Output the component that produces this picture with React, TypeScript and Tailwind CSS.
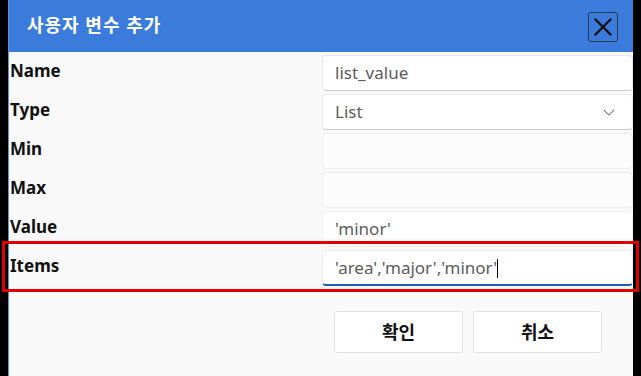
import { useState } from 'react';

const fields = [
  { label: 'Name', value: 'list_value', kind: 'text' },
  { label: 'Type', value: 'List', kind: 'select' },
  { label: 'Min', value: '', kind: 'empty' },
  { label: 'Max', value: '', kind: 'empty' },
  { label: 'Value', value: "'minor'", kind: 'plain' },
  { label: 'Items', value: "'area','major','minor'", kind: 'focus' },
];

function FieldBox({ kind, value }: { kind: string; value: string }) {
  let cls =
    'h-[36px] flex items-center px-[12px] rounded-[4px] text-[17px] text-[#5c5c5c] border ';
  if (kind === 'empty') cls += 'bg-[#fcfcfc] border-[#ececec]';
  else if (kind === 'plain') cls += 'bg-white border-[#f1f1f1]';
  else if (kind === 'focus') cls += 'bg-white border-[#ececec] border-b-2 border-b-[#1a5fb4]';
  else cls += 'bg-white border-[#e8e8e8] border-b-[#c9c9c9]';

  return (
    <div className={cls}>
      <span className="flex-1 whitespace-pre">
        {value}
        {kind === 'focus' && <span className="inline-block w-px h-[19px] bg-black align-middle -mt-[2px]" />}
      </span>
      {kind === 'select' && (
        <svg className="w-[14px] h-[14px] text-[#777] mr-[4px]" viewBox="0 0 16 16" fill="none" stroke="currentColor" strokeWidth={1.2}>
          <path d="M2 5.5l6 6 6-6" />
        </svg>
      )}
    </div>
  );
}

export default function App() {
  const [open] = useState(true);
  if (!open) return null;

  return (
    <div className="relative flex w-[641px] h-[376px] bg-black overflow-hidden" style={{ fontFamily: '"Noto Sans", "Noto Sans CJK KR", sans-serif' }}>
      <div className="w-[8px]" />
      <div className="flex-1 flex flex-col bg-[#f9f9f9] border-l border-[#5b8de0]">
        {/* title bar */}
        <div className="h-[52px] flex items-center justify-between bg-[#3b7bdb] pl-[18px] pr-[15px]">
          <h3 className="text-[18px] font-bold text-white tracking-[1px] -mt-[1px]">사용자 변수 추가</h3>
          <button className="w-[30px] h-[30px] mt-[2px] flex items-center justify-center border border-[#2a3950] rounded-[3px]">
            <svg className="w-[22px] h-[22px]" viewBox="0 0 24 24" fill="none" stroke="#111" strokeWidth={2.6}>
              <path d="M3 3l18 18M21 3L3 21" />
            </svg>
          </button>
        </div>

        {/* fields */}
        <div className="flex flex-col gap-[3px] pt-[3px]">
          {fields.map((f) => (
            <div key={f.label} className="grid grid-cols-[313px_1fr] items-center">
              <div className="pl-[1px] text-[17px] font-bold text-[#111] -mt-[4px]">{f.label}</div>
              <FieldBox kind={f.kind} value={f.value} />
            </div>
          ))}
        </div>

        <div className="flex gap-[10px] pl-[325px] pt-[25px]">
          <button className="w-[129px] h-[42px] bg-white border border-[#e2e2e2] rounded-[3px] text-[18px] font-bold text-[#111]">확인</button>
          <button className="w-[129px] h-[42px] bg-white border border-[#e2e2e2] rounded-[3px] text-[18px] font-bold text-[#111]">취소</button>
        </div>
      </div>
      <div className="w-[8px]" />

      {/* annotation highlight */}
      <div className="absolute left-[2px] top-[241px] w-[637px] h-[51px] border-[3px] border-[#e00000]" />
    </div>
  );
}
